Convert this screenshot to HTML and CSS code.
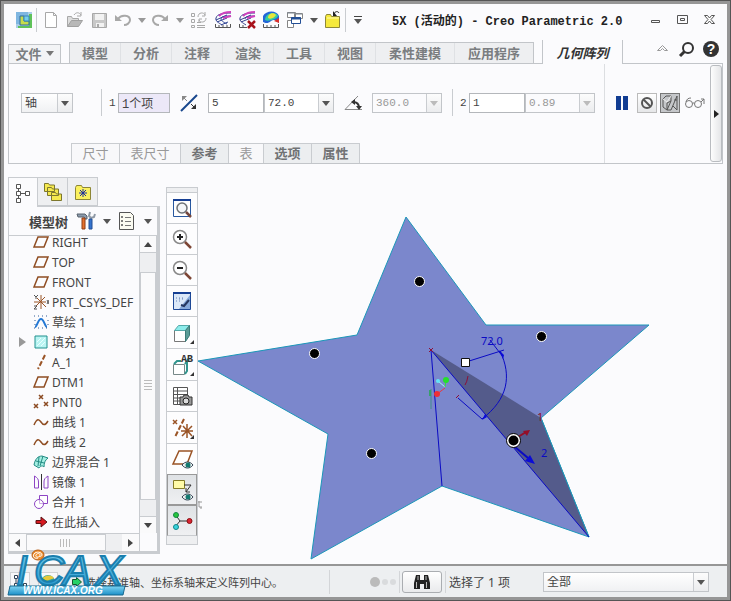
FILE: index.html
```html
<!DOCTYPE html>
<html lang="zh-CN">
<head>
<meta charset="utf-8">
<title>5X (活动的) - Creo Parametric 2.0</title>
<link rel="stylesheet" href="styles.css">
</head>
<body>
<div class="window">
  <header class="titlebar">
    <svg class="icon logo" viewBox="0 0 24 24"><rect x="4" y="4" width="16" height="16" fill="#a9cde8"/><path d="M4 4h12v4H8v8H4z" fill="#7fb6e0"/><path d="M20 6v14H6v-2h11V6z" fill="#5fc25a"/><path d="M8 8h4v5h5v4H8z" fill="#c6dc4c" stroke="#2c6a9c"/><path d="M12 8h5v5h-5z" fill="#74cdea" stroke="#3b88b8"/></svg>
    <span class="rule"></span>
    <div class="quick">
      <button aria-label="新建"><svg class="icon" viewBox="0 0 24 24"><path d="M6.500 4.500h8l3 3v12h-11zM14.500 4.500v3h3" fill="#fff" stroke="#a8a8a8"/></svg></button>
      <button aria-label="打开"><svg class="icon" viewBox="0 0 24 24"><path d="M4.500 18.500v-10h4l1 2h6v3" fill="#ddd" stroke="#a8a8a8"/><path d="M4.500 18.500l4-6h11l-4 6z" fill="#b8b8b8" stroke="#a0a0a0"/><path d="M11 7c2-3 5-3 7 0m0-3v4h-4" fill="none" stroke="#a8a8a8"/></svg></button>
      <button aria-label="保存"><svg class="icon" viewBox="0 0 24 24"><path d="M5.500 5.500h14v14h-14z" fill="#c8c8c8" stroke="#a8a8a8"/><path d="M8 6h9v6H8zM9 15h8v4H9z" fill="#f2f2f2"/><path d="M10 16h2v3h-2z" fill="#aaa"/></svg></button>
      <button aria-label="撤消"><svg class="icon" viewBox="0 0 24 24"><path d="M7 11c3-5 12-4 12 1 0 3-3 5-6 5" fill="none" stroke="#a8a8a8" stroke-width="2"/><path d="M4 7v6h7z" fill="#a8a8a8"/></svg></button>
      <button class="menu off" aria-label="撤消列表"><i class="caret"></i></button>
      <button aria-label="重做"><svg class="icon" viewBox="0 0 24 24"><path d="M16 11c-3-5-12-4-12 1 0 3 3 5 6 5" fill="none" stroke="#a8a8a8" stroke-width="2"/><path d="M19 7v6h-7z" fill="#a8a8a8"/></svg></button>
      <button class="menu off" aria-label="重做列表"><i class="caret"></i></button>
      <button aria-label="重新生成"><svg class="icon" viewBox="0 0 24 24" fill="none" stroke="#a8a8a8"><path d="M4.500 5.500h3v3h-3zM4.500 11.500h3v3h-3zM4.500 17.500h3v2h-3zM10 17.500h8M10 19.500h8M10 14.500h4"/><path d="M11 9c0-5 6-5 7-2m0-3v4h-3M19 10c0 5-6 5-7 2m0 3v-4h3"/></svg></button>
      <button aria-label="曲线分析"><svg class="icon" viewBox="0 0 24 24" fill="none"><path d="M20 5c-8 0-14 1-15 5-1 3 3 5 6 7" stroke="#343f8c"/><path d="M20 8c-5 0-10 0-10 3 0 2 4 4 6 5M5 12l11-5M6 14l10-4M10 17l7-3" stroke="#2e4494"/><path d="M20 4c-5 0-9 1-12 4M20 8l-8 2" stroke="#cf42bd" stroke-width="2"/><path d="M4.500 16v3.500h15V16M8 17v2M12 17v2M16 17v2" stroke="#555"/></svg></button>
      <button aria-label="删除分析"><svg class="icon" viewBox="0 0 24 24" fill="none"><path d="M20 5c-8 0-14 1-15 5-1 3 3 5 6 7M20 8c-5 0-10 0-10 3M5 12l11-5M6 14l10-4" stroke="#343f8c"/><path d="M20 4c-5 0-9 1-12 4M20 8l-8 2" stroke="#cf42bd" stroke-width="2"/><path d="M4.500 16v3.500H12M8 17v2" stroke="#555"/><path d="M13 13l7 7m0-7l-7 7" stroke="#a8121c" stroke-width="2.500"/></svg></button>
      <button aria-label="着色分析"><svg class="icon" viewBox="0 0 24 24"><path d="M4 14V8c3-6 14-6 16 0v7c-3-3-5-4-8-2-3 3-6 2-8 1z" fill="#2467d8"/><path d="M6 12c0-8 12-9 13-4-1 3-10 6-13 4z" fill="#35cda0"/><path d="M9 10c0-5 6-6 8-3-1 2-5 5-8 3z" fill="#e7e53c"/><path d="M15 13l5-3v5z" fill="#d8302c"/><path d="M4.500 16v3.500h15V16M8 17v2M12 17v2M16 17v2" fill="none" stroke="#555"/></svg></button>
      <button aria-label="窗口"><svg class="icon" viewBox="0 0 24 24" fill="#fff"><path d="M4.500 4.500h8v5h-8zM11.500 5.500h8v5h-8zM4.500 12.500h6v7h-6z" stroke="#858585"/><path d="M4 5h8M12 6h7" stroke="#7d8590"/><path d="M8.500 9.500h9v6h-9z" stroke="#234f96"/><path d="M8 10.500h10" stroke="#234f96" stroke-width="2"/></svg></button>
      <button class="menu" aria-label="窗口列表"><i class="caret"></i></button>
      <button aria-label="关闭文件"><svg class="icon" viewBox="0 0 24 24"><path d="M4.500 19.500v-11l1-2h4l1 2h8v11z" fill="#f6e93c" stroke="#8f8838"/><path d="M6 10h12" stroke="#fffbb4"/><path d="M13 6c1-3 4-3 5-1" fill="none" stroke="#222"/><path d="M12 3v5h4z" fill="#222"/></svg></button>
      <span class="rule"></span>
      <button class="menu wide" aria-label="自定义"><i class="bar"></i><i class="caret"></i></button>
    </div>
    <h1>5X (活动的) - Creo Parametric 2.0</h1>
    <div class="winbtns">
      <button aria-label="最小化"><svg class="icon" viewBox="0 0 24 24"><path d="M7.500 12.500h8v2h-8z" fill="none" stroke="#555"/></svg></button>
      <button aria-label="最大化"><svg class="icon" viewBox="0 0 24 24" fill="none" stroke="#555"><path d="M6.500 7.500h10v8h-10zM9.500 10.500h4v2h-4z"/></svg></button>
      <button aria-label="关闭"><svg class="icon" viewBox="0 0 24 24"><path d="M6.500 7.500h3l2 2.500 2-2.500h3l-3.500 4 3.500 4h-3l-2-2.500-2 2.500h-3l3.500-4z" fill="#fff" stroke="#555"/></svg></button>
    </div>
  </header>

  <nav class="tabs">
    <button class="file">文件<i class="caret"></i></button>
    <div class="group">
      <button>模型</button><button>分析</button><button>注释</button><button>渲染</button><button>工具</button><button>视图</button><button class="long">柔性建模</button><button class="long">应用程序</button>
    </div>
    <button class="active">几何阵列</button>
    <div class="help">
      <button aria-label="折叠"><svg class="icon" viewBox="0 0 24 24"><path d="M6.500 13.500l5-5 5 5h-3l-2-2-2 2z" fill="none" stroke="#999"/></svg></button>
      <button aria-label="搜索"><svg class="icon" viewBox="0 0 24 24"><circle cx="13" cy="11" r="5" fill="none" stroke="#333" stroke-width="2"/><path d="M9.500 14.500L5 19" stroke="#333" stroke-width="3"/></svg></button>
      <button aria-label="帮助"><svg class="icon" viewBox="0 0 24 24"><circle cx="12" cy="12" r="8" fill="#333"/><text x="12" y="17" text-anchor="middle" class="qmark">?</text></svg></button>
    </div>
  </nav>

  <section class="ribbon">
    <div class="dash">
      <div class="controls">
        <div class="combo kind"><select aria-label="阵列类型"><option>轴</option></select><i class="caret"></i></div>
        <span class="rule far"></span>
        <label class="num" for="axis">1</label>
        <input id="axis" class="picked" value="1个项">
        <button class="flip" aria-label="反向"><svg class="icon" viewBox="0 0 24 24"><path d="M4 20L20 4" stroke="#17468c" stroke-width="2"/><path d="M6 6l4 4" stroke="#888"/><path d="M5 5h5l-5 5z" fill="#888"/><path d="M14 13l4 4" stroke="#333"/><path d="M19 18h-5l5-5z" fill="#333"/></svg></button>
        <input aria-label="成员数" value="5">
        <div class="combo"><select aria-label="角度"><option>72.0</option></select><i class="caret"></i></div>
        <button class="flip" aria-label="角度范围"><svg class="icon" viewBox="0 0 24 24" fill="none"><path d="M17 5L4 18.500h17" stroke="#888"/><path d="M12 11c4 0 6 2 6 6" stroke="#333" stroke-width="2"/><path d="M10 11l4-3v6zM15 15h6l-3 4z" fill="#333"/></svg></button>
        <div class="combo off"><select aria-label="总角度" disabled><option>360.0</option></select><i class="caret"></i></div>
        <span class="rule near"></span>
        <label class="num" for="dir2">2</label>
        <input id="dir2" value="1">
        <div class="combo off"><select aria-label="径向距离" disabled><option>0.89</option></select><i class="caret"></i></div>
      </div>
      <div class="subtabs">
        <button disabled>尺寸</button><button disabled class="w3">表尺寸</button><button>参考</button><button disabled class="w1">表</button><button>选项</button><button>属性</button>
      </div>
    </div>
    <div class="confirm">
      <button class="bare" aria-label="暂停"><svg class="icon" viewBox="0 0 24 24"><path d="M6 5h5v14H6zM13 5h5v14h-5z" fill="#113c92"/></svg></button>
      <button class="raised" aria-label="无预览"><svg class="icon" viewBox="0 0 24 24" fill="none" stroke="#555" stroke-width="2"><circle cx="12" cy="12" r="5"/><path d="M8.500 8.500l7 7"/></svg></button>
      <button class="pressed" aria-label="附加预览"><svg class="icon" viewBox="0 0 24 24" fill="none" stroke="#555"><path d="M5 8l3-3h5v5l-4 2v7l-4-3zM13 10l-4 9h4l6-14v14l-4-4M16 9h3"/><path d="M5 8l4 3 4-6" stroke="#eee"/></svg></button>
      <button class="bare" aria-label="校验"><svg class="icon" viewBox="0 0 24 24" fill="none" stroke="#777"><circle cx="6" cy="13" r="3.500"/><circle cx="15" cy="13" r="3.500"/><path d="M9.500 12h2M3 11c1-3 2-4 5-4M18 11l3-3v5M18 8h3"/></svg></button>
    </div>
    <button class="handle" aria-label="更多"><i></i></button>
  </section>

  <main>
    <aside class="side">
      <div class="sidetabs">
        <button class="on" aria-label="模型树"><svg class="icon" viewBox="0 0 24 24" fill="#fff" stroke="#555"><path d="M7.500 7v10M7.500 12.500h7" /><path d="M5.500 3.500h4v4h-4zM5.500 10.500h4v4h-4zM5.500 17.500h4v4h-4zM14.500 10.500h4v4h-4z"/></svg></button>
        <button aria-label="文件夹浏览器"><svg class="icon" viewBox="0 0 24 24" fill="#f5e94e" stroke="#7d772e"><path d="M3.500 11.500v-8h4l1 1.500h5v6.500zM6.500 15.500v-8h4l1 1.500h6v6.500zM10.500 20.500v-8h4l1 1.500h5v6.500z"/></svg></button>
        <button aria-label="收藏夹"><svg class="icon" viewBox="0 0 24 24"><path d="M4.500 19.500v-12l1-2h5l1 2h8v12z" fill="#fbf15e" stroke="#8d8636"/><path d="M12 9v8M8 13h8M9 10l6 6m0-6l-6 6" stroke="#1d2f9c"/></svg></button>
      </div>
      <div class="panel">
        <div class="phead">
          <h2>模型树</h2>
          <button aria-label="设置"><svg class="icon" viewBox="0 0 24 24"><path d="M3 5h8l2 2v3h-2l-1-2H4z" fill="#8b9aab" stroke="#59636e"/><path d="M8 9h3v11H8z" fill="#e5702c" stroke="#8d3d17"/><path d="M16 3l-1 4 2 2 3-1 1-3" fill="none" stroke="#8e99a5" stroke-width="2"/><path d="M15 10h3v10h-3z" fill="#3573cd" stroke="#234f94"/></svg></button>
          <button class="menu" aria-label="设置列表"><i class="caret"></i></button>
          <button aria-label="显示"><svg class="icon" viewBox="0 0 24 24"><path d="M4.500 3.500h11l3 3v14h-14z" fill="#fbfbf1" stroke="#555"/><path d="M10 8.500h6M10 12.500h6M10 16.500h6" stroke="#777"/><path d="M6.500 7.500h1v1h-1zM6.500 11.500h1v1h-1zM6.500 15.500h1v1h-1z" fill="none" stroke="#555"/></svg></button>
          <button class="menu" aria-label="显示列表"><i class="caret"></i></button>
        </div>
        <div class="treebox">
          <ul class="tree">
            <li><svg viewBox="0 0 16 16"><path class="plane" d="M5 3h10l-4 10H1z"/></svg>RIGHT</li>
            <li><svg viewBox="0 0 16 16"><path class="plane" d="M5 3h10l-4 10H1z"/></svg>TOP</li>
            <li><svg viewBox="0 0 16 16"><path class="plane" d="M5 3h10l-4 10H1z"/></svg>FRONT</li>
            <li><svg viewBox="0 0 16 16" fill="none"><path d="M8 1v14M1 8h12M4 4l9 9M12 3l-9 9" stroke="#9a5426"/><path d="M1 1l2 2 2-2M3 3v2M14 6l2 4m0-4l-2 4M1 12h3l-3 3h3" stroke="#555"/></svg>PRT_CSYS_DEF</li>
            <li><svg viewBox="0 0 16 16"><path d="M2 13c2 0 3-8 6-8s4 8 6 8" fill="none" stroke="#2478d4" stroke-width="2"/><path d="M1 2h14M1 14h14M2 6v5M15 6v5" stroke="#315b95" stroke-dasharray="1 3"/></svg>草绘 1</li>
            <li class="parent"><svg viewBox="0 0 16 16"><path d="M2 2h12v12H2z" fill="#b9f4f2" stroke="#20908e"/><path d="M4 12l8-8M4 8l4-4M8 12l4-4" stroke="#e9ffff"/></svg>填充 1</li>
            <li><svg viewBox="0 0 16 16"><path d="M12 1L5 15" stroke="#9a5426" stroke-width="2" stroke-dasharray="5 2"/></svg>A_1</li>
            <li><svg viewBox="0 0 16 16"><path class="plane" d="M5 3h10l-4 10H1z"/></svg>DTM1</li>
            <li><svg viewBox="0 0 16 16"><path d="M6 1l4 4m0-4L6 5M1 10l4 4m0-4l-4 4M11 8l4 4m0-4l-4 4" stroke="#8b4a22" stroke-width="1.500"/></svg>PNT0</li>
            <li><svg viewBox="0 0 16 16"><path class="plane" d="M1 11c3-7 5-6 7-3s4 4 7-1"/></svg>曲线 1</li>
            <li><svg viewBox="0 0 16 16"><path class="plane" d="M1 11c3-7 5-6 7-3s4 4 7-1"/></svg>曲线 2</li>
            <li><svg viewBox="0 0 16 16"><path d="M1 11c1-6 4-9 8-9l6 2c-3 2-4 5-4 9-2-2-3-1-5 1z" fill="#a5efe3" stroke="#238b83"/><path d="M3 7l8 2M6 3l-1 9M10 2L7 12" stroke="#238b83" fill="none"/></svg>边界混合 1</li>
            <li><svg viewBox="0 0 16 16" fill="none" stroke="#8d45c4"><path d="M1.500 2c3 2 4 3 4 6v6h-4zM15 2c-3 2-4 3-4 6v6h4z"/><path d="M8.500 0v16" stroke="#333"/></svg>镜像 1</li>
            <li><svg viewBox="0 0 16 16" fill="#fff" stroke="#8d45c4"><path d="M6.500 1.500h8v8h-8z"/><circle cx="6" cy="10" r="4.500"/><path d="M6.500 6v3.500H10" fill="none" stroke="#ccaae4"/></svg>合并 1</li>
            <li><svg viewBox="0 0 16 16"><path d="M3 6.500h5V3l6 5-6 5V9.500H3z" fill="#d71920" stroke="#5b1215"/></svg>在此插入</li>
          </ul>
          <div class="vbar"><button aria-label="向上滚动"><i class="up"></i></button><span class="thumb"><i></i></span><button aria-label="向下滚动"><i class="down"></i></button></div>
        </div>
        <div class="hbar"><button aria-label="向左滚动"><i class="left"></i></button><span class="thumb"><i></i></span><button aria-label="向右滚动"><i class="right"></i></button></div>
      </div>
    </aside>

    <div class="viewtools">
      <button aria-label="重新调整"><svg class="icon" viewBox="0 0 24 24"><path d="M3.500 3.500h17v17h-17z" fill="#fff" stroke="#2858a0"/><path d="M3 4h18" stroke="#163f93" stroke-width="2"/><circle cx="12" cy="12" r="5" fill="#f4f6f8" stroke="#6e7276" stroke-width="1.500"/><path d="M16 16l5 5" stroke="#74473d" stroke-width="2.500"/></svg></button>
      <button aria-label="放大"><svg class="icon" viewBox="0 0 24 24"><circle cx="10" cy="10" r="6.500" fill="#fff" stroke="#888" stroke-width="1.500"/><path d="M10 7v6M7 10h6" stroke="#222" stroke-width="2"/><path d="M15 15l6 6" stroke="#7d4635" stroke-width="2.500"/></svg></button>
      <button aria-label="缩小"><svg class="icon" viewBox="0 0 24 24"><circle cx="10" cy="10" r="6.500" fill="#fff" stroke="#888" stroke-width="1.500"/><path d="M7 10h6" stroke="#222" stroke-width="2"/><path d="M15 15l6 6" stroke="#7d4635" stroke-width="2.500"/></svg></button>
      <button aria-label="重画"><svg class="icon" viewBox="0 0 24 24"><path d="M3.500 3.500h17v17h-17z" fill="#dbe8f8" stroke="#1d4896"/><path d="M20 6v14H9z" fill="#86a9da"/><path d="M3 4h18" stroke="#163f93" stroke-width="2"/><path d="M11 16l3 1 5-6" stroke="#25375f" stroke-width="2" fill="none"/><path d="M6 9h7M6 12h4M9 10h6" stroke="#6581b5" stroke-dasharray="1 2"/></svg></button>
      <button class="sub" aria-label="显示样式"><svg class="icon" viewBox="0 0 24 24"><path d="M4.500 9.500h11v11h-11z" fill="#fff" stroke="#777"/><path d="M4.500 9.500l4-5h11l-4 5z" fill="#8ceceb" stroke="#5aa"/><path d="M15.500 9.500l4-5v10l-4 6z" fill="#5a9c97" stroke="#3d7b77"/></svg></button>
      <button class="sub" aria-label="已保存方向"><svg class="icon" viewBox="0 0 24 24"><path d="M3.500 11.500h11v10h-11z" fill="#fff" stroke="#788"/><path d="M4 11l3-3h4M15 11l2-3v10l-2 3" fill="none" stroke="#32958e" stroke-width="2"/><text x="11" y="9" class="ab">AB</text></svg></button>
      <button aria-label="视图管理器"><svg class="icon" viewBox="0 0 24 24"><path d="M3.500 3.500h14v17h-14zM3.500 7h14M3.500 10.500h14M3.500 14h14M3.500 17h14M7.500 3v17" fill="#fff" stroke="#555"/><path d="M10 13h3l1-2h4l1 2h3v8H10z" fill="#999" stroke="#333"/><circle cx="16" cy="17" r="3" fill="#ddd" stroke="#222"/></svg></button>
      <button class="sub" aria-label="基准显示"><svg class="icon" viewBox="0 0 24 24" stroke="#9a5426" stroke-width="1.500"><path d="M3 4l4 4m0-4L3 8"/><path d="M14 3L5 21" stroke-width="2" stroke-dasharray="5 2"/><path d="M17 8v14M11 15h12M13 10l9 10M22 10l-10 10"/></svg></button>
      <button aria-label="平面显示"><svg class="icon" viewBox="0 0 24 24"><path d="M9 4h13l-5 13H3z" fill="#fff" stroke="#9a5426" stroke-width="1.500"/><path d="M12 18c3-4 8-4 11 0-3 4-8 4-11 0z" fill="#eee" stroke="#345"/><circle cx="18" cy="18" r="2.500" fill="#137a70"/></svg></button>
      <button class="down" aria-label="注释显示"><svg class="icon" viewBox="0 0 24 24"><path d="M3.500 2.500h11v8h-11z" fill="#fffba8" stroke="#857c28"/><path d="M14 7h7l-5 7m0-4v4h4" fill="none" stroke="#333"/><path d="M12 19c3-4 8-4 11 0-3 4-8 4-11 0z" fill="#eee" stroke="#345"/><circle cx="18" cy="19" r="2.500" fill="#137a70"/></svg></button>
      <button class="down" aria-label="旋转中心"><svg class="icon" viewBox="0 0 24 24"><path d="M5 5l5 7h10M10 12l-5 6" fill="none" stroke="#333"/><circle cx="6" cy="6" r="2.500" fill="#28c63c" stroke="#184"/><circle cx="19.500" cy="12" r="2.500" fill="#dc2333" stroke="#811"/><circle cx="6" cy="18" r="2.500" fill="#38d3df" stroke="#188"/></svg></button>
    </div>

    <div class="canvas">
      <svg viewBox="198 164 529 400" preserveAspectRatio="xMinYMin meet" role="img" aria-label="五角星模型">
        <path d="M406 217L486 325H649L541 418L589 537L442 486L311 559L328 434L198 361L357 335Z" fill="#7b87cc" stroke="#1b97b8"/>
        <path d="M431 350L541 418L589 537Z" fill="#545b8b"/>
        <path d="M541 418L589 537" stroke="#1b97b8"/>
        <g fill="none" stroke="#0a0ac4"><path d="M442 486L431 350L589 537M466 362L504 350M490 340l13 17M500 351C512 376 508 399 482 419L458 398"/><path d="M515 447l13 11" stroke-width="2"/></g>
        <path d="M535 464l-10-3 5-6zM482 420l3-6 2 3zM499 350l5 5-1 4z" fill="#0a0ad8"/>
        <text x="481" y="345" class="dim">72.0</text><text x="541" y="457" class="dim">2</text>
        <text x="537" y="421" class="dim red">1</text><path d="M429 348l4 4m0-4l-4 4M468 376q-1 6-3 9M456 398l3-3" stroke="#8c1038" fill="none"/>
        <path d="M518 437l8-5" stroke="#940e28" stroke-width="2"/><path d="M530 430l-3 6-4-5z" fill="#940e28"/>
        <path d="M431 389v20" stroke="#428c8a"/><path d="M430 390v6" stroke="#36a06a" stroke-width="2"/>
        <path d="M438 381l7 6" stroke="#a9f4fb"/><path d="M446 381l-1 6" stroke="#35e23a"/><path d="M437 394l8-6" stroke="#ec3740"/>
        <circle cx="438" cy="381" r="2" fill="#63e5f8"/><circle cx="446" cy="380" r="3" fill="#25e02a"/><circle cx="437" cy="394" r="3" fill="#ee2f36"/>
        <path d="M461.500 358.500h8v8h-8z" fill="#fff" stroke="#111"/>
        <g fill="#000" stroke="#fff"><circle cx="419.500" cy="281.500" r="5"/><circle cx="541.500" cy="336.500" r="5"/><circle cx="314.500" cy="353.500" r="5"/><circle cx="371.500" cy="453.500" r="5"/></g>
        <circle cx="513.500" cy="440.500" r="7" fill="#fff" stroke="#000"/><circle cx="513.500" cy="440.500" r="5"/>
        <path d="M198 502h4M199 501v6h3M201 507v2" fill="none" stroke="#999"/>
      </svg>
    </div>
  </main>

  <footer class="status">
    <button class="tool" aria-label="导航器"><svg class="icon" viewBox="0 0 24 24" fill="#fff" stroke="#345"><path d="M8 8v8M8 15h8"/><path d="M6.500 5.500h3v3h-3zM6.500 13.500h3v3h-3zM15.500 13.500h3v3h-3z"/></svg></button>
    <button class="tool" aria-label="浏览器"><svg class="icon" viewBox="0 0 24 24"><circle cx="12" cy="12" r="7" fill="#2aa3a5"/><path d="M5 10c3-5 10-6 13-2-3 2-6 1-8 5-2 1-4-1-5-3z" fill="#e7c93a"/></svg></button>
    <p class="msg"><svg viewBox="0 0 12 12"><path d="M1.500 3.500h4v-2l5 4.500-5 4.500v-2h-4z" fill="#26d265" stroke="#14562e"/></svg>选择基准轴、坐标系轴来定义阵列中心。</p>
    <span class="dots"><i></i><i></i><i></i></span>
    <span class="find"><button aria-label="查找"><svg class="icon" viewBox="0 0 24 24"><path d="M6 5h4v5h4V5h4l2 8v6h-6v-5h-4v5H4v-6z" fill="#222"/><path d="M6.500 12v6M16.500 12v6M8 6v4M16 6v4" stroke="#bbb"/></svg></button></span>
    <span class="count">选择了 1 项</span>
    <div class="combo filter"><select aria-label="过滤器"><option>全部</option></select><i class="caret"></i></div>
  </footer>

  <svg class="brand" viewBox="0 0 120 50" role="img" aria-label="ICAX">
    <defs><linearGradient id="aqua" x1="0" y1="0" x2="0" y2="1"><stop offset="0" stop-color="#7fd4f2"/><stop offset="1" stop-color="#1c8fc8"/></linearGradient></defs>
    <g class="letters"><text x="8" y="36">I</text><text x="26" y="36">C</text><text x="55" y="36">A</text><text x="87" y="36">X</text></g>
    <ellipse cx="30" cy="6" rx="6" ry="5" fill="#ef8f2e" stroke="#b55d16"/><path d="M32 7c-2 2-5 1-4-1s4-2 4 0 1 2 2 0c0-3-6-4-8-1s1 5 4 4" fill="none" stroke="#fff"/>
    <path d="M2 37h115l-2 9H0z" fill="url(#aqua)" stroke="#17688f"/>
    <text x="15" y="45" class="url">WWW.ICAX.ORG</text>
  </svg>
</div>
</body>
</html>
```
FILE: styles.css
```css
* { box-sizing: border-box; }
html { height: 100%; background: #555; }
body {
  margin: 0;
  min-height: 100%;
  display: flex;
  padding: 1px;
  font: 12px "Noto Sans", "Noto Sans CJK SC", sans-serif;
  color: #444;
}
button {
  margin: 0;
  padding: 0;
  border: 0;
  background: none;
  font: inherit;
  color: inherit;
  display: flex;
  align-items: center;
  justify-content: center;
}
h1, h2, p, ul { margin: 0; padding: 0; }
.icon { width: 24px; height: 24px; display: block; flex: none; }
.caret {
  width: 0;
  height: 0;
  border: 4px solid transparent;
  border-top: 5px solid #555;
  border-bottom: 0;
}
.rule { width: 1px; background: #c9ccd0; align-self: center; }

.window {
  position: relative;
  flex: 1;
  display: flex;
  flex-direction: column;
  border: 3px solid #969696;
  background: #fbfbfd;
}

/* Title bar */
.titlebar {
  height: 36px;
  display: flex;
  align-items: center;
  padding: 0 4px 4px 8px;
}
.titlebar .rule { height: 24px; }
.quick { display: flex; align-items: center; padding-left: 2px; }
.menu { width: 14px; height: 20px; }
.menu.off .caret { border-top-color: #999; }
.menu.wide { width: 24px; flex-direction: column; }
.bar { width: 8px; height: 1px; margin-bottom: 2px; background: #444; }
h1 {
  flex: 1;
  padding-left: 22px;
  font: bold 12px "Liberation Mono", "Noto Sans CJK SC", monospace;
  color: #222;
  white-space: nowrap;
}
.winbtns { display: flex; }
.winbtns button { width: 27px; }

/* Ribbon tabs */
.tabs {
  height: 23px;
  display: flex;
  align-items: flex-end;
  padding: 0 4px;
  font-size: 13px;
  font-weight: 700;
  color: #7a7d80;
}
.file {
  width: 53px;
  height: 19px;
  padding-bottom: 2px;
  gap: 4px;
  border: 1px solid #c2c5c9;
  border-bottom: 0;
  background: #f3f4f6;
}
.file .caret { border-top-color: #777; }
.group {
  display: flex;
  margin-left: 8px;
  border: 1px solid #c2c5c9;
  border-bottom: 0;
  background: #eeeff1;
}
.group button { width: 51px; height: 20px; padding-bottom: 2px; border-right: 1px solid #dfe1e4; }
.group .long { width: 79px; }
.group button:last-child { width: 78px; border-right: 0; }
.tabs .active {
  position: relative;
  width: 81px;
  height: 24px;
  margin: 0 0 -1px 8px;
  border: solid #c2c5c9;
  border-width: 0 1px;
  background: #fbfbfd;
  color: #333;
  font-style: italic;
}
.help { display: flex; height: 24px; margin-left: auto; align-self: center; padding-bottom: 6px; }
.qmark { font: bold 14px "Liberation Sans", sans-serif; fill: #fff; }

/* Dashboard */
.ribbon {
  height: 101px;
  margin: 0 4px;
  display: flex;
  border: 1px solid #c2c5c9;
}
.dash { flex: 1; display: flex; flex-direction: column; }
.controls { flex: 1; display: flex; align-items: center; padding: 0 0 2px 12px; }
.controls .rule { height: 27px; }
.far { margin-left: 28px; }
.near { margin-left: 10px; }
.num { width: 16px; padding-left: 7px; font: 11px "Liberation Mono", monospace; }
input, select {
  height: 20px;
  margin: 0;
  padding: 0 3px;
  border: 1px solid #b4b7bb;
  border-radius: 0;
  background: #fff;
  color: #444;
  font: 11px "Liberation Mono", "Noto Sans CJK SC", monospace;
}
.controls input { width: 56px; }
.controls .picked { width: 52px; background: #ece8f8; font-size: 12px; }
.flip { width: 38px; }
.combo { position: relative; width: 70px; }
.combo select { appearance: none; width: 100%; display: block; opacity: 1; border-color: #c2c5c9; }
.combo::after {
  content: "";
  position: absolute;
  inset: 1px 1px 1px auto;
  width: 14px;
  border-left: 1px solid #c9ccd0;
  background: linear-gradient(#fcfcfc, #ebecee);
  pointer-events: none;
}
.combo .caret { position: absolute; z-index: 1; right: 4px; top: 8px; pointer-events: none; }
.combo.kind { width: 52px; }
.combo.kind select, .combo.filter select { padding-top: 2px; font-size: 12px; background: linear-gradient(#fff, #f0f1f3); }
.combo.off select { color: #999; background: #fbfbfd; }
.combo.off .caret { border-top-color: #bbb; }
.subtabs { display: flex; padding-left: 62px; }
.subtabs button {
  width: 48px;
  height: 20px;
  padding-bottom: 2px;
  border: solid #c9ccd0;
  border-width: 1px 1px 0 0;
  background: #eceef0;
  font-size: 13px;
  font-weight: 700;
  color: #707274;
}
.subtabs button:first-child { width: 49px; border-left-width: 1px; }
.subtabs button:disabled { background: #f8f8fa; color: #999; font-weight: 400; }
.subtabs .w3 { width: 61px; }
.subtabs .w1 { width: 35px; }
.confirm {
  width: 106px;
  display: flex;
  align-items: flex-start;
  gap: 3px;
  padding: 29px 0 0 5px;
  border-left: 1px solid #dcdee1;
}
.confirm button { width: 20px; height: 20px; }
.confirm .bare { width: 24px; }
.raised { border: 1px solid #bbb; background: linear-gradient(#fff, #e6e7e9); }
.pressed { border: 1px solid #777; background: #c5c7ca; }
.handle {
  width: 12px;
  border: 1px solid #b9bcc0;
  border-radius: 3px;
  background: linear-gradient(90deg, #fdfdfd, #e4e5e7);
  margin: 1px 0;
}
.handle i { border: 4px solid transparent; border-left: 5px solid #222; border-right: 0; }

/* Work area */
main { flex: 1; display: flex; align-items: flex-start; padding-left: 4px; }
.side { width: 152px; padding-top: 13px; }
.sidetabs { display: flex; height: 30px; margin-bottom: -1px; }
.sidetabs button {
  width: 30px;
  height: 29px;
  border: 1px solid #c9ccd0;
  border-left: 0;
  background: #eeeff1;
}
.sidetabs .on { position: relative; height: 30px; border-left: 1px solid #c9ccd0; border-bottom: 0; background: #fbfbfd; }
.panel { border: 1px solid #c9ccd0; border-width: 1px 3px 3px 1px; }
.phead { height: 29px; display: flex; align-items: center; padding-left: 20px; border-bottom: 1px solid #c9ccd0; }
.phead h2 { width: 46px; font-size: 13px; font-weight: 700; }
.phead .menu { width: 18px; }
.treebox { height: 297px; display: flex; overflow: hidden; }
.tree { flex: 1; min-width: 0; margin-top: -4px; list-style: none; }
.tree li { position: relative; height: 20px; display: flex; align-items: center; gap: 3px; padding-left: 24px; white-space: nowrap; }
.tree svg { width: 16px; height: 16px; flex: none; }
.plane { fill: none; stroke: #8f4d22; stroke-width: 1.5; }
.parent::before {
  content: "";
  position: absolute;
  left: 10px;
  border: 5px solid transparent;
  border-left: 7px solid #999;
  border-right: 0;
}
.vbar { width: 18px; display: flex; flex-direction: column; background: #eeeff1; border: solid #c9ccd0; border-width: 0 1px; }
.vbar button { height: 17px; border-bottom: 1px solid #c9ccd0; background: #fafafb; }
.vbar button:last-child { border: 0; border-top: 1px solid #c9ccd0; }
.vbar .thumb { flex: 1; margin: 19px 0 16px; }
.thumb { display: flex; align-items: center; justify-content: center; border: 1px solid #c9ccd0; background: #fafafb; }
.vbar .thumb i { width: 8px; height: 12px; background: repeating-linear-gradient(#bbb 0 1px, #fafafb 1px 3px); }
.hbar { height: 18px; display: flex; margin-right: 17px; border: solid #c9ccd0; border-width: 1px 1px 0 0; background: #eeeff1; }
.hbar button { width: 17px; background: #fafafb; }
.hbar .thumb { flex: 1; margin-right: 16px; }
.hbar .thumb i { width: 12px; height: 8px; background: repeating-linear-gradient(90deg, #bbb 0 1px, #fafafb 1px 3px); }
.up, .left, .right, i.down { border: 4px solid transparent; }
.up { border-bottom: 5px solid #444; border-top: 0; }
i.down { border-top: 5px solid #444; border-bottom: 0; }
.left { border-right: 5px solid #444; border-left: 0; }
.right { border-left: 5px solid #444; border-right: 0; }

.viewtools {
  width: 32px;
  margin: 23px 0 0 6px;
  padding: 4px 0 8px;
  border: 1px solid #c9ccd0;
  background: #eeeff1;
}
.viewtools button {
  position: relative;
  width: 100%;
  height: 31px;
  border-top: 1px solid #c9ccd0;
  background: #fdfdfe;
}
.viewtools .sub { height: 32px; }
.viewtools .sub::after {
  content: "";
  position: absolute;
  right: 3px;
  bottom: 4px;
  border-left: 4px solid transparent;
  border-bottom: 4px solid #333;
}
.viewtools .down { border: 1px solid #999; background: linear-gradient(#dfe2e5, #eff0f2); }
.viewtools button:last-child { border-bottom: 1px solid #c9ccd0; }
.ab { font: bold 10px "Liberation Mono", monospace; fill: #333; }
.canvas { flex: 1; min-width: 0; }
.canvas svg { display: block; width: 100%; }
.dim { font: 11px "Noto Sans", sans-serif; fill: #0a0ac4; }
.dim.red { fill: #8c1024; }

/* Status bar */
.status {
  height: 33px;
  display: flex;
  align-items: center;
  padding-left: 6px;
  border-top: 2px solid #969696;
  background: #edeff1;
}
.tool { width: 20px; height: 20px; margin-right: 8px; border: 1px solid #d0d2d5; background: #f8f8fa; }
.msg { flex: 1; display: flex; align-items: center; gap: 2px; padding-left: 5px; font-size: 11px; white-space: nowrap; }
.msg svg { width: 12px; height: 12px; flex: none; }
.dots { width: 70px; height: 24px; display: flex; align-items: center; gap: 2px; padding-left: 40px; border-left: 1px solid #d3d5d8; }
.dots i { width: 6px; height: 6px; flex: none; border-radius: 50%; background: #d9dbdd; }
.dots i:first-child { width: 10px; height: 10px; background: #bbb; }
.find { padding: 0 3px 0 2px; border: solid #d3d5d8; border-width: 0 1px; }
.find button { width: 40px; height: 22px; border: 1px solid #aaadb1; border-radius: 3px; background: linear-gradient(#fff, #e9eaec); }
.count { width: 97px; padding-left: 3px; white-space: nowrap; }
.combo.filter { width: 166px; margin-right: 18px; }

/* Brand overlay */
.brand { position: absolute; left: 4px; bottom: -2px; width: 120px; height: 50px; overflow: visible; pointer-events: none; }
.letters { font: italic 42px "Liberation Sans", sans-serif; fill: url(#aqua); stroke: #1a7fae; stroke-width: 2px; }
.url { font: italic bold 10px "Liberation Sans", sans-serif; fill: #fff; }
```
